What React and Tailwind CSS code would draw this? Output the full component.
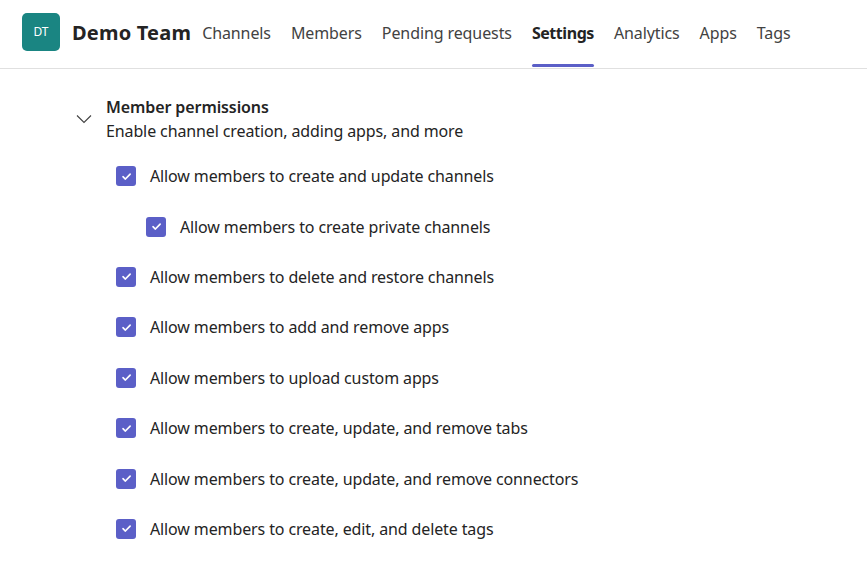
import React from "react";

const font = { fontFamily: '"Segoe UI", "Noto Sans", "Open Sans", sans-serif' };

function Check() {
  return (
    <div className="w-5 h-5 rounded-[3px] bg-[#5b5fc7] flex items-center justify-center shrink-0">
      <svg width="11" height="11" viewBox="0 0 10 10" fill="none">
        <path d="M1.8 5.2 L4 7.3 L8.3 2.9" stroke="white" strokeWidth="1.5" strokeLinecap="round" strokeLinejoin="round" />
      </svg>
    </div>
  );
}

function Row({ label, nested }) {
  return (
    <div className={`flex items-center h-[50.4px] gap-[14px] ${nested ? "pl-[30px]" : ""}`}>
      <Check />
      <span className="text-[16px] text-[#242424] leading-5 tracking-[-0.12px]">{label}</span>
    </div>
  );
}

export default function App() {
  const tabs = ["Channels", "Members", "Pending requests", "Settings", "Analytics", "Apps", "Tags"];
  const rows = [
    ["Allow members to create and update channels", false],
    ["Allow members to create private channels", true],
    ["Allow members to delete and restore channels", false],
    ["Allow members to add and remove apps", false],
    ["Allow members to upload custom apps", false],
    ["Allow members to create, update, and remove tabs", false],
    ["Allow members to create, update, and remove connectors", false],
    ["Allow members to create, edit, and delete tags", false],
  ];
  return (
    <div className="w-[867px] h-[563px] bg-white overflow-hidden" style={font}>
      <div className="h-[69px] border-b border-[#e0e0e0] flex items-center pl-[22px]">
        <div className="w-[38px] h-[38px] rounded-[5px] bg-[#1a8582] flex items-center justify-center text-white text-[12px] mb-[5px]">
          DT
        </div>
        <div className="ml-[12px] text-[20px] font-bold text-[#242424] mb-[3px] tracking-[0.2px]">Demo Team</div>
        <div className="flex h-full ml-[11px] gap-[20px]">
          {tabs.map((t) => (
            <div key={t} className="relative h-full flex items-center">
              <span
                className={`text-[16px] mb-[3px] ${t === "Settings" ? "font-bold text-[#242424] tracking-[-0.45px]" : "text-[#424242] tracking-[-0.1px]"}`}
              >
                {t}
              </span>
              {t === "Settings" && (
                <div className="absolute left-0 right-0 bottom-[1px] h-[3px] rounded-full bg-[#5b5fc7]" />
              )}
            </div>
          ))}
        </div>
      </div>
      <div className="pl-[76px] pt-[26px]">
        <div className="flex">
          <div className="w-[30px] pt-[19px]">
            <svg width="16" height="10" viewBox="0 0 16 10" fill="none">
              <path d="M1 1.5 L8 8.5 L15 1.5" stroke="#424242" strokeWidth="1.1" />
            </svg>
          </div>
          <div>
            <div className="text-[16px] font-semibold text-[#242424] leading-6 tracking-[-0.1px]">Member permissions</div>
            <div className="text-[16px] text-[#242424] leading-6 tracking-[-0.12px]">Enable channel creation, adding apps, and more</div>
          </div>
        </div>
        <div className="pl-[40px] mt-[8px]">
          {rows.map(([l, n]) => (
            <Row key={l} label={l} nested={n} />
          ))}
        </div>
      </div>
    </div>
  );
}
